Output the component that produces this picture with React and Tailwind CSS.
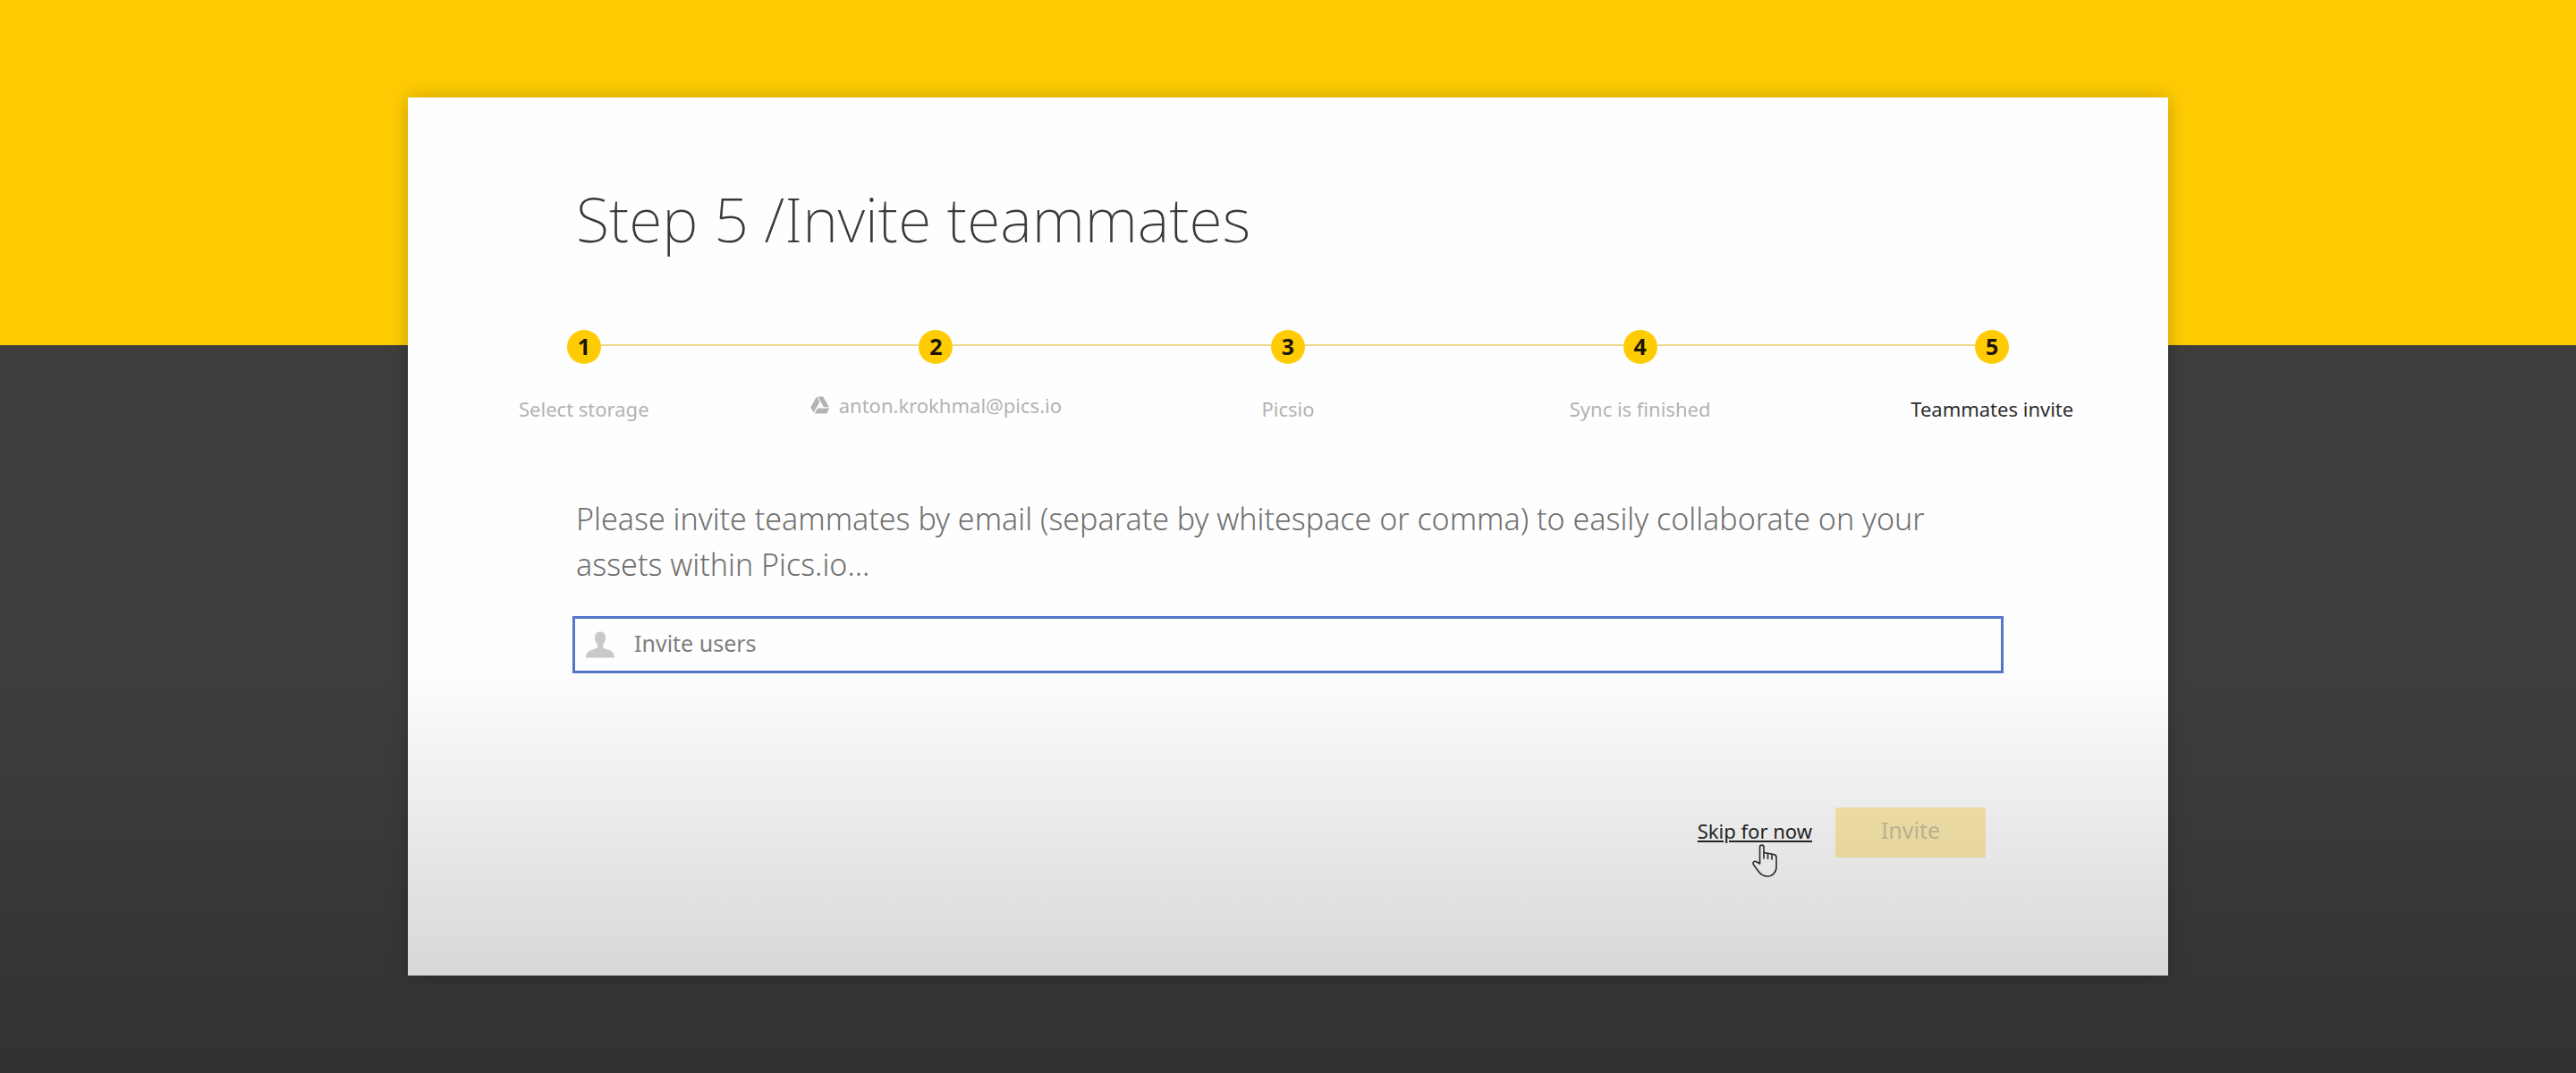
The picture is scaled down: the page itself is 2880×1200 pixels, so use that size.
import React from 'react';

const steps = [
  { label: 'Select storage' },
  { label: 'anton.krokhmal@pics.io', drive: true },
  { label: 'Picsio' },
  { label: 'Sync is finished' },
  { label: 'Teammates invite', current: true },
];

function DriveIcon() {
  return (
    <svg viewBox="0 0 22 20" className="h-5 w-[22px] shrink-0" fill="currentColor" aria-hidden="true">
      <path d="M7 0.5 L10.4 6.5 L3.7 18.5 L0.3 12.5 Z" />
      <path d="M8.2 0.5 H14.2 L21 12.3 H15 Z" />
      <path d="M8.2 13.6 H21.5 L18.2 19.5 H4.9 Z" />
    </svg>
  );
}

function UserIcon() {
  return (
    <svg viewBox="0 0 32 30" className="h-[30px] w-8 shrink-0 text-[#c9c9c9]" fill="currentColor" aria-hidden="true">
      <path d="M16 0.5 C20 0.5 22 3 22 7 C22 10.5 20.8 13.5 19 15 V18 C19.5 19.2 22 19.8 25 20.8 C29.5 22.3 31.8 24 32 29.5 H0 C0.2 24 2.5 22.3 7 20.8 C10 19.8 12.5 19.2 13 18 V15 C11.2 13.5 10 10.5 10 7 C10 3 12 0.5 16 0.5 Z" />
    </svg>
  );
}

function HandCursor() {
  return (
    <svg
      viewBox="0 0 28 37"
      className="pointer-events-none absolute top-full left-[61px] z-20 -mt-1.5 h-[37px] w-7"
      fill="#e6e6e6"
      stroke="#2b2b2b"
      strokeWidth="1.6"
      strokeLinejoin="round"
      strokeLinecap="round"
      aria-hidden="true"
    >
      <path d="M8.5 22 V3.5 C8.5 0.3 13 0.3 13 3.5 V9.5 L24 11.5 C26 12 27 13 27 15 V25.5 C27 31.5 22.5 36 17 36 C12.5 36 9.5 34 7 30.5 L1.5 23 C0 20.5 2.5 18.5 4.8 19.7 Z" />
      <path d="M13 9.5 V16 M17.5 10.5 V16.5 M22 11.5 V17" fill="none" />
    </svg>
  );
}

function Step({ number, step }) {
  return (
    <li className={`flex flex-col items-center ${step.current ? 'text-[#2e2e2e]' : 'text-[#b3b3b3]'}`}>
      <div className="flex w-full items-center">
        <span className={`mb-1 h-0.5 flex-1 ${number === 1 ? '' : 'bg-[#ecd98a]'}`} />
        <span className="flex size-[38px] items-center justify-center rounded-full bg-[#ffcc03] text-[25px] font-bold text-[#1c1503]">
          {number}
        </span>
        <span className={`mb-1 h-0.5 flex-1 ${number === steps.length ? '' : 'bg-[#ecd98a]'}`} />
      </div>
      <span className={`flex items-center gap-2.5 text-[22px] leading-8 ${step.drive ? 'mt-[30px]' : 'mt-[34px]'}`}>
        {step.drive && <DriveIcon />}
        {step.label}
      </span>
    </li>
  );
}

export default function App() {
  return (
    <main className="relative flex min-h-screen flex-col items-center bg-[linear-gradient(#ffcc03_386px,#3e3e3d_386px)] py-[109px] font-['Noto_Sans','Open_Sans',sans-serif]">
      <section className="w-41/60 bg-[#fefefe] pt-24 pb-[132px] shadow-[0_0_22px_rgba(0,0,0,0.22)]">
        <h1 className="px-[188px] text-[68px] leading-[80px] font-extralight text-[#3a3a3a]">
          Step 5 /Invite teammates
        </h1>

        <ol className="mt-[84px] grid grid-cols-5">
          {steps.map((step, i) => (
            <Step key={step.label} number={i + 1} step={step} />
          ))}
        </ol>

        <form className="mt-[82px] px-[184px]" onSubmit={(e) => e.preventDefault()}>
          <label htmlFor="invite-users" className="block px-1 text-[34px] leading-[51px] font-light text-[#707070]">
            Please invite teammates by email (separate by whitespace or comma) to easily collaborate on your
            assets within Pics.io...
          </label>
          <div className="mt-8 flex h-16 items-center gap-[22px] border-3 border-[#5276c8] bg-[#fefefe] px-3">
            <UserIcon />
            <input
              id="invite-users"
              type="text"
              placeholder="Invite users"
              className="h-full min-w-0 flex-1 bg-transparent pb-1 text-[25px] text-[#444] outline-none placeholder:text-[#7d7d7d]"
            />
          </div>

          <div className="mt-[150px] flex items-center justify-end gap-[26px] pr-5">
            <div className="relative pb-0.5 leading-8">
              <a href="#skip" className="text-[22px] text-[#262626] underline underline-offset-2">
                Skip for now
              </a>
              <HandCursor />
            </div>
            <button type="submit" className="h-14 w-[168px] bg-[#fdecae] pb-1 text-[25px] text-[#cdbfa0]">
              Invite
            </button>
          </div>
        </form>
      </section>

      <div className="pointer-events-none absolute inset-x-0 bottom-0 z-10 h-[460px] bg-linear-to-b from-black/0 to-black/20" />
    </main>
  );
}
